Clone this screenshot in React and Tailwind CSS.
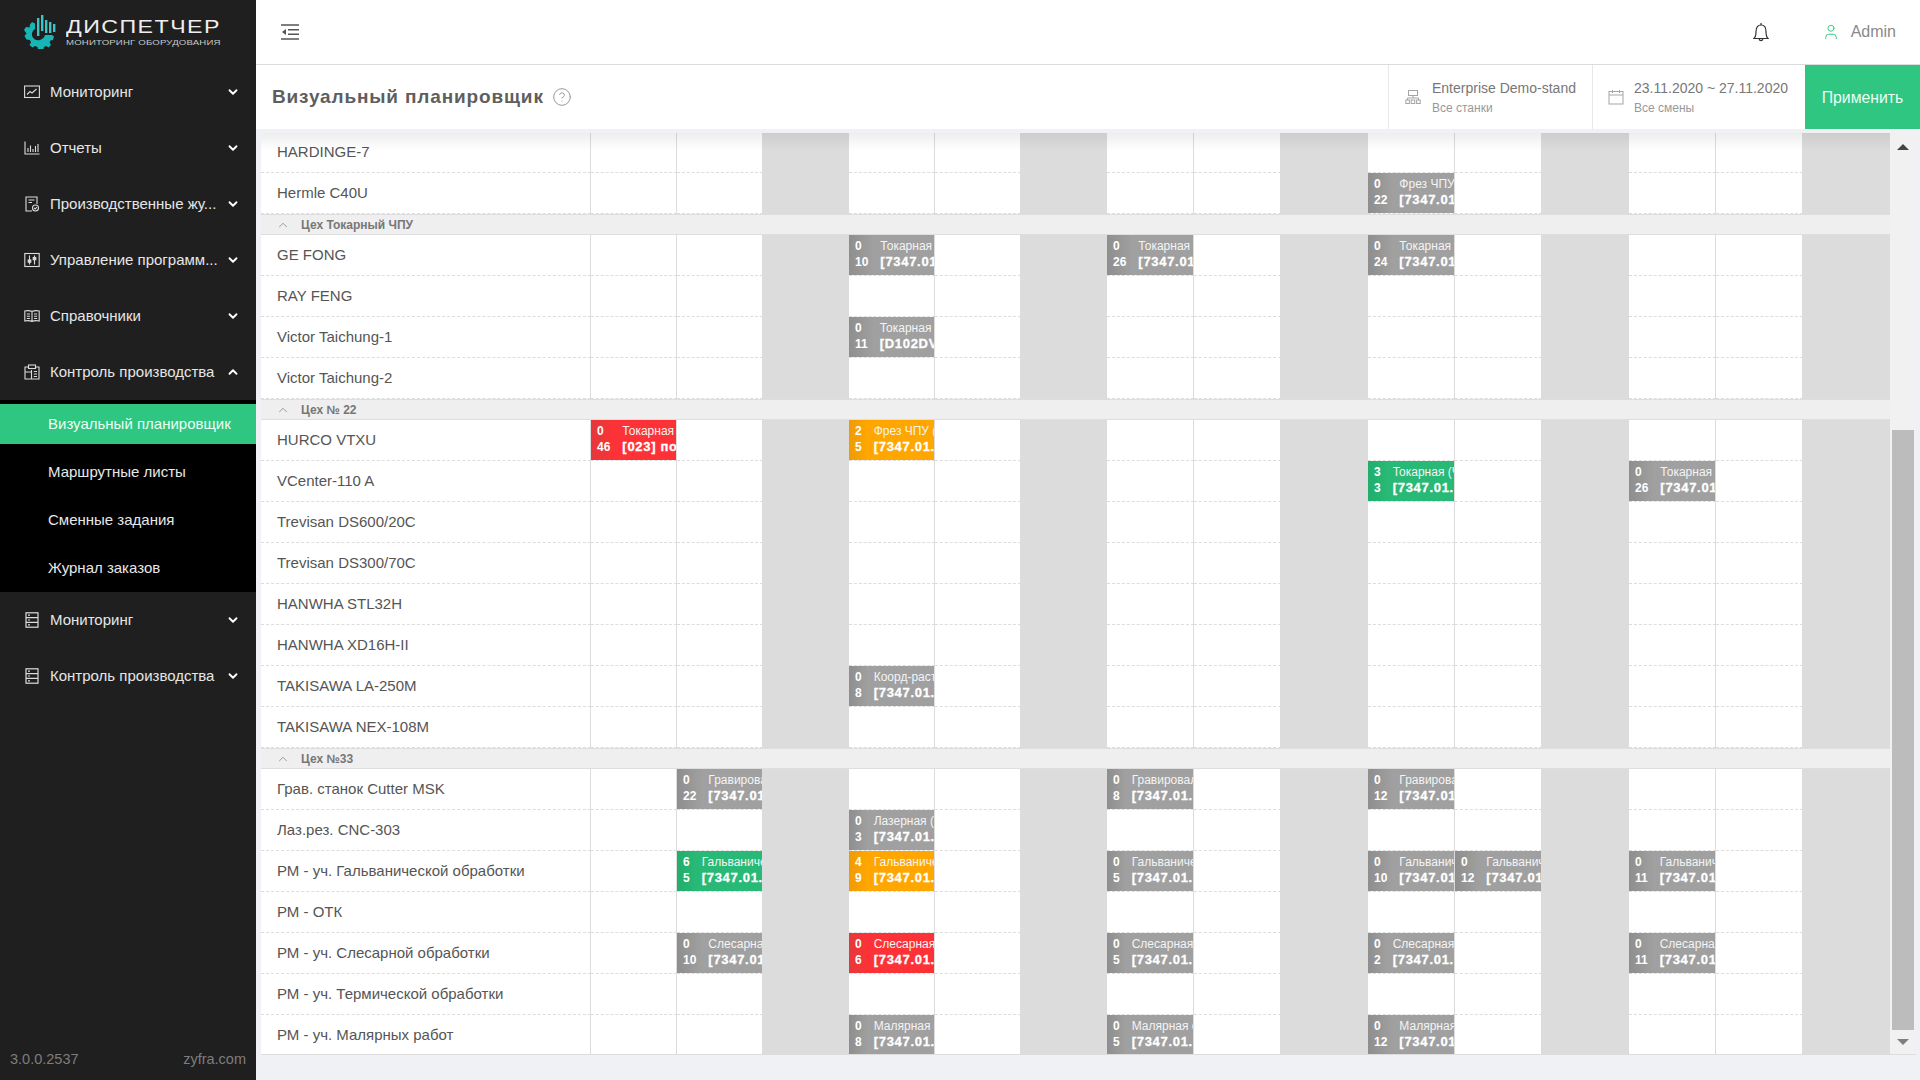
import React from 'react';
import { ChevronDown, ChevronUp, User, CircleHelp } from 'lucide-react';

const FONT = 'font-["Liberation_Sans",Arial,sans-serif]';

const IconChart = () => (
  <svg className="w-4 h-4" viewBox="0 0 16 16" fill="none" stroke="currentColor" strokeWidth="1.1">
    <rect x="0.6" y="2" width="14.8" height="11.5" />
    <path d="M3 10.5 L6 7.5 L8 9 L12.5 5" />
  </svg>
);
const IconBars = () => (
  <svg className="w-4 h-4" viewBox="0 0 16 16" fill="none" stroke="currentColor" strokeWidth="1.1">
    <path d="M1 1.5 V14 H15.5" />
    <path d="M4 12 V8 M6.5 12 V5.5 M9 12 V9 M11.5 12 V6 M14 12 V4" />
  </svg>
);
const IconJournal = () => (
  <svg className="w-4 h-4" viewBox="0 0 16 16" fill="none" stroke="currentColor" strokeWidth="1.1">
    <path d="M8 15 H2 V1 H13 V8" />
    <path d="M4.5 4 H10.5 M4.5 6.5 H8" />
    <circle cx="11.5" cy="12" r="3" />
    <path d="M10.2 12 L11.2 13 L12.8 11.2" />
  </svg>
);
const IconSliders = () => (
  <svg className="w-4 h-4" viewBox="0 0 16 16" fill="none" stroke="currentColor" strokeWidth="1.1">
    <rect x="0.8" y="1.5" width="14.4" height="13" />
    <path d="M5.5 3.5 V12.5 M10.5 3.5 V12.5" />
    <rect x="4.2" y="8" width="2.6" height="2.2" fill="currentColor" />
    <rect x="9.2" y="5.5" width="2.6" height="2.2" fill="currentColor" />
  </svg>
);
const IconBook = () => (
  <svg className="w-4 h-4" viewBox="0 0 16 16" fill="none" stroke="currentColor" strokeWidth="1.1">
    <path d="M8 3.5 C6 2.5 3 2.5 0.8 3 V13 C3 12.5 6 12.5 8 13.5 C10 12.5 13 12.5 15.2 13 V3 C13 2.5 10 2.5 8 3.5 V13.5" />
    <path d="M2.8 6 H6 M2.8 8.3 H6 M2.8 10.5 H6 M10 6 H13.2 M10 8.3 H13.2 M10 10.5 H13.2" />
  </svg>
);
const IconClipboard = () => (
  <svg className="w-4 h-4" viewBox="0 0 16 16" fill="none" stroke="currentColor" strokeWidth="1.1">
    <path d="M4 3 H1 V15 H15 V3 H12" />
    <rect x="4.5" y="1" width="7" height="3.5" />
    <path d="M7.5 6 V15 M1 8 H7.5 M9.8 7.5 H13 M9.8 10 H13 M9.8 12.5 H13" />
  </svg>
);
const IconList = () => (
  <svg className="w-4 h-4" viewBox="0 0 16 16" fill="none" stroke="currentColor" strokeWidth="1.2">
    <rect x="2" y="0.8" width="12" height="14.4" />
    <path d="M2 5.6 H14 M2 10.4 H14" />
    <path d="M4 3.2 H6 M4 8 H6 M4 12.8 H6" />
  </svg>
);

const IconMenuFold = () => (
  <svg className="w-[18px] h-[16px]" viewBox="0 0 18 16" fill="none" stroke="#555555" strokeWidth="1.5">
    <path d="M0 1 H18 M7 5.7 H18 M7 10.3 H18 M0 15 H18" />
    <path d="M1 8 L5 5 V11 Z" fill="#555555" stroke="none" />
  </svg>
);
const IconBell = () => (
  <svg className="w-[16px] h-[20px]" viewBox="0 0 16 20" fill="none" stroke="#333333" strokeWidth="1.2">
    <path d="M1 16.5 C2.6 15 3 13 3 9.5 C3 5.2 5 3 8 3 C11 3 13 5.2 13 9.5 C13 13 13.4 15 15 16.5 Z" />
    <path d="M8 1 V3" />
    <path d="M6.3 17 C6.5 19.2 9.5 19.2 9.7 17" strokeWidth="1.4" />
  </svg>
);
const IconOrg = () => (
  <svg className="w-[16px] h-[16px]" viewBox="0 0 16 16" fill="none" stroke="#a5a5a5" strokeWidth="1">
    <rect x="3.5" y="1.5" width="9" height="5" />
    <path d="M8 6.5 V9 M2.5 11 V9 H13.5 V11" />
    <rect x="0.8" y="11" width="3.6" height="3.5" />
    <rect x="6.2" y="11" width="3.6" height="3.5" />
    <rect x="11.6" y="11" width="3.6" height="3.5" />
  </svg>
);
const IconCalendar = () => (
  <svg className="w-[16px] h-[16px]" viewBox="0 0 16 16" fill="none" stroke="#a5a5a5" strokeWidth="1">
    <rect x="1" y="2.5" width="14" height="12.5" />
    <path d="M1 6 H15 M4.5 1 V4 M11.5 1 V4" />
  </svg>
);

const Logo = () => (
  <svg className="w-[34px] h-[34px] shrink-0" viewBox="0 0 34 34">
    <path
      fill="#19b5b5"
      d="M9 7 L12 8.5 V14 C9.5 15.5 8.5 18 9 20.5 C9.8 24 13.5 26 17 25 C20 24 21.5 22 22 20 L29 20 L31 21.5 L30 25 L27.5 25.5 L26.5 27.5 L28 30 L25.5 32.5 L23 31 L21 32 L20.5 34 L15 34 L14.5 32 L12 31 L9.5 32.5 L6.5 30 L8 27.5 L7 25 L3.5 24.5 L1.5 21 L3.5 18.5 L1 15 L3 12 L6.5 12.5 L7 9.5 Z"
    />
    <g fill="#3fc4c4">
      <rect x="14" y="3" width="2.4" height="18" />
      <rect x="18" y="0" width="2.4" height="16" />
      <rect x="22" y="5" width="2.4" height="13" />
      <rect x="26" y="7" width="2.4" height="11" />
      <rect x="30" y="9" width="2.4" height="8" />
    </g>
  </svg>
);

const menuTop = [
  ['Мониторинг', IconChart],
  ['Отчеты', IconBars],
  ['Производственные жу...', IconJournal],
  ['Управление программ...', IconSliders],
  ['Справочники', IconBook],
];
const subMenu = ['Маршрутные листы', 'Сменные задания', 'Журнал заказов'];

const MenuItem = ({ label, Icon, open }) => (
  <div className="h-14 flex items-center pl-[24px] pr-[16px] text-[#e6e6e6]">
    <span className="w-[26px] text-[#dcdcdc]"><Icon /></span>
    <span className="flex-1 text-[15px] whitespace-nowrap pt-[1px]">{label}</span>
    {open ? (
      <ChevronUp className="w-[14px] h-[14px] text-white" strokeWidth={3.2} />
    ) : (
      <ChevronDown className="w-[14px] h-[14px] text-white" strokeWidth={3.2} />
    )}
  </div>
);

const Sidebar = () => (
  <aside className="w-[256px] shrink-0 h-full bg-[#1f1f1f] flex flex-col">
    <div className="h-16 flex items-center pl-[23px] gap-[9px]">
      <Logo />
      <div className="flex flex-col text-[#eeeeee] leading-none">
        <span className="text-[19px] tracking-[1.2px] scale-x-[1.22] origin-left whitespace-nowrap">ДИСПЕТЧЕР</span>
        <span className="text-[8px] tracking-[0.15px] scale-x-[1.2] origin-left mt-[3px] text-[#c8c8c8] whitespace-nowrap">МОНИТОРИНГ ОБОРУДОВАНИЯ</span>
      </div>
    </div>
    {menuTop.map(([label, Icon]) => <MenuItem key={label} label={label} Icon={Icon} />)}
    <MenuItem label="Контроль производства" Icon={IconClipboard} open />
    <div className="bg-black py-1 flex flex-col gap-2">
      <div className="h-10 bg-[#2ec681] pl-[48px] flex items-center text-[15px] text-[#eafff4] whitespace-nowrap">Визуальный планировщик</div>
      {subMenu.map((s) => (
        <div key={s} className="h-10 pl-[48px] flex items-center text-[15px] text-[#e8e8e8]">{s}</div>
      ))}
    </div>
    <MenuItem label="Мониторинг" Icon={IconList} />
    <MenuItem label="Контроль производства" Icon={IconList} />
    <div className="mt-auto h-[40px] flex items-center justify-between px-[10px] text-[14.5px] text-[#7d7d7d]">
      <span>3.0.0.2537</span>
      <span>zyfra.com</span>
    </div>
  </aside>
);

const TopBar = () => (
  <header className="h-[65px] shrink-0 bg-white border-b border-[#dcdcdc] flex items-center pl-[25px]">
    <IconMenuFold />
    <div className="ml-auto flex items-center">
      <IconBell />
      <User className="w-[18px] h-[18px] text-[#39c78a] ml-[53px]" strokeWidth={1.3} />
      <span className="ml-[11px] mr-[24px] text-[16px] text-[#8a8a8a]">Admin</span>
    </div>
  </header>
);

const TitleBar = () => (
  <div className="h-[64px] shrink-0 bg-white flex items-center">
    <h1 className="pl-[16px] pt-[1px] text-[19px] font-bold tracking-[0.85px] text-[#5e5e5e] whitespace-nowrap">Визуальный планировщик</h1>
    <CircleHelp className="w-[20px] h-[20px] ml-[8px] text-[#9a9a9a]" strokeWidth={1.2} />
    <div className="ml-auto flex h-full">
      <div className="w-[204px] border-l border-[#e8e8e8] flex items-center pl-[16px]">
        <span className="mr-[11px]"><IconOrg /></span>
        <div className="leading-none whitespace-nowrap">
          <div className="text-[14px] text-[#777777]">Enterprise Demo-stand</div>
          <div className="text-[12px] text-[#999999] mt-[7px]">Все станки</div>
        </div>
      </div>
      <div className="w-[213px] border-l border-[#e8e8e8] flex items-center pl-[15px]">
        <span className="mr-[10px]"><IconCalendar /></span>
        <div className="leading-none whitespace-nowrap">
          <div className="text-[14px] text-[#777777]">23.11.2020 ~ 27.11.2020</div>
          <div className="text-[12px] text-[#999999] mt-[7px]">Все смены</div>
        </div>
      </div>
      <div className="w-[115px] pt-[1px] bg-[#2ec681] text-[#eafff4] flex items-center justify-center text-[15.8px]">Применить</div>
    </div>
  </div>
);

const palette = {
  grey: ['bg-[#a0a0a0]', 'from-[#8e8e8e] to-[#a0a0a0]'],
  red: ['bg-[#fd3236]', 'from-[#e5383b] to-[#fd3236]'],
  orange: ['bg-[#ffa600]', 'from-[#ef9b05] to-[#ffa600]'],
  green: ['bg-[#27b975]', 'from-[#22ad6b] to-[#27b975]'],
};

const Block = ({ color = 'grey', a, b, name, code = '[7347.01.0000' }) => (
  <div className={`h-[40px] w-full flex overflow-hidden text-white whitespace-nowrap ${palette[color][0]}`}>
    <div className={`shrink-0 px-1.5 pt-[3px] flex flex-col items-start bg-gradient-to-r ${palette[color][1]} font-bold text-[12px] leading-[16px]`}>
      <span>{a}</span>
      <span>{b}</span>
    </div>
    <div className="pl-[6px] pt-[3px]">
      <div className="text-[12px] leading-[16px] text-[#f4f4f4]">{name}</div>
      <div className="text-[13px] leading-[16px] font-bold tracking-[0.7px] [-webkit-text-stroke:0.3px_white]">{code}</div>
    </div>
  </div>
);

const G = 'Гальваническая обработка';
const S = 'Слесарная обработка';
const M = 'Малярная обработка';
const T = 'Токарная (ЧПУ)';
const P = 'Гравировальная';

const groups = [
  {
    rows: [
      { name: 'HARDINGE-7', first: true },
      { name: 'Hermle C40U', cells: { 9: { a: 0, b: 22, name: 'Фрез ЧПУ (3D)' } } },
    ],
  },
  {
    title: 'Цех Токарный ЧПУ',
    rows: [
      { name: 'GE FONG', cells: { 3: { a: 0, b: 10, name: T }, 6: { a: 0, b: 26, name: T }, 9: { a: 0, b: 24, name: T } } },
      { name: 'RAY FENG' },
      { name: 'Victor Taichung-1', cells: { 3: { a: 0, b: 11, name: T, code: '[D102DV0000' } } },
      { name: 'Victor Taichung-2' },
    ],
  },
  {
    title: 'Цех № 22',
    rows: [
      { name: 'HURCO VTXU', cells: { 0: { color: 'red', a: 0, b: 46, name: 'Токарная', code: '[023] поз' }, 3: { color: 'orange', a: 2, b: 5, name: 'Фрез ЧПУ (3D)' } } },
      { name: 'VCenter-110 A', cells: { 9: { color: 'green', a: 3, b: 3, name: T }, 12: { a: 0, b: 26, name: T } } },
      { name: 'Trevisan DS600/20C' },
      { name: 'Trevisan DS300/70C' },
      { name: 'HANWHA STL32H' },
      { name: 'HANWHA XD16H-II' },
      { name: 'TAKISAWA LA-250M', cells: { 3: { a: 0, b: 8, name: 'Коорд-расточная' } } },
      { name: 'TAKISAWA NEX-108M' },
    ],
  },
  {
    title: 'Цех №33',
    rows: [
      { name: 'Грав. станок Cutter MSK', cells: { 1: { a: 0, b: 22, name: P }, 6: { a: 0, b: 8, name: P }, 9: { a: 0, b: 12, name: P } } },
      { name: 'Лаз.рез. CNC-303', cells: { 3: { a: 0, b: 3, name: 'Лазерная (ЧПУ)' } } },
      { name: 'РМ - уч. Гальванической обработки', cells: { 1: { color: 'green', a: 6, b: 5, name: G }, 3: { color: 'orange', a: 4, b: 9, name: G }, 6: { a: 0, b: 5, name: G }, 9: { a: 0, b: 10, name: G }, 10: { a: 0, b: 12, name: G }, 12: { a: 0, b: 11, name: G } } },
      { name: 'РМ - ОТК' },
      { name: 'РМ - уч. Слесарной обработки', cells: { 1: { a: 0, b: 10, name: S }, 3: { color: 'red', a: 0, b: 6, name: S }, 6: { a: 0, b: 5, name: S }, 9: { a: 0, b: 2, name: S }, 12: { a: 0, b: 11, name: S } } },
      { name: 'РМ - уч. Термической обработки' },
      { name: 'РМ - уч. Малярных работ', cells: { 3: { a: 0, b: 8, name: M }, 6: { a: 0, b: 5, name: M }, 9: { a: 0, b: 12, name: M } } },
    ],
  },
];

const columns = Array.from({ length: 15 }, (_, i) => i);

const Row = ({ row, last }) => (
  <div className={`grid grid-cols-[330px_repeat(6,86px)_repeat(9,87px)] ${row.first ? 'h-[40px]' : 'h-[41px]'}`}>
    <div className={`pl-[16px] flex items-center text-[15px] text-[#555555] whitespace-nowrap border-r border-[#dcdcdc] ${last ? '' : 'border-b border-dashed border-b-[#dddddd] [border-right-style:solid]'}`}>
      {row.name}
    </div>
    {columns.map((c) => {
      const off = c % 3 === 2;
      if (off) return <div key={c} className="bg-[#dcdcdc]" />;
      return (
        <div key={c} className={`min-w-0 overflow-hidden border-r border-[#dcdcdc] ${last ? '' : 'border-b border-dashed border-b-[#dddddd] [border-right-style:solid]'}`}>
          {row.cells && row.cells[c] ? <Block {...row.cells[c]} /> : null}
        </div>
      );
    })}
  </div>
);

const GroupRow = ({ title }) => (
  <div className="h-[21px] bg-[#efefef] border-y border-[#dedede] flex items-center pl-[15px] text-[12px] font-bold text-[#777777]">
    <ChevronUp className="w-[14px] h-[14px] text-[#777777] mr-[11px]" strokeWidth={1.2} />
    <span>{title}</span>
  </div>
);

const Scrollbar = () => (
  <div className="w-[27px] shrink-0 bg-[#f1f1f1] flex flex-col items-center border-r border-[#e2e2e2]">
    <div className="h-[297px] w-full flex justify-center pt-[11px]">
      <span className="w-0 h-0 border-x-[6px] border-x-transparent border-b-[6px] border-b-[#444444]" />
    </div>
    <div className="h-[600px] w-[22px] bg-[#bcbcbc]" />
    <div className="flex-1 flex justify-center items-center">
      <span className="w-0 h-0 border-x-[6px] border-x-transparent border-t-[6px] border-t-[#7f7f7f]" />
    </div>
  </div>
);

const Planner = () => (
  <div className="mt-[4px] ml-[5px] mr-[4px] h-[922px] flex bg-white rounded-tl-[5px] overflow-hidden border-b border-[#dcdcdc] relative">
    <div className="w-[1629px] shrink-0">
      {groups.map((g, i) => (
        <div key={i}>
          {g.title ? <GroupRow title={g.title} /> : null}
          {g.rows.map((r, j) => (
            <Row key={r.name} row={r} last={i === groups.length - 1 && j === g.rows.length - 1} />
          ))}
        </div>
      ))}
    </div>
    <Scrollbar />
    <div className="absolute left-0 top-0 w-[1629px] h-[18px] bg-gradient-to-b from-[#00000012] to-transparent pointer-events-none" />
  </div>
);

export default function App() {
  return (
    <div className={`w-[1920px] h-[1080px] flex overflow-hidden ${FONT}`}>
      <Sidebar />
      <main className="flex-1 min-w-0 flex flex-col bg-[#eff1f5]">
        <TopBar />
        <TitleBar />
        <Planner />
      </main>
    </div>
  );
}
